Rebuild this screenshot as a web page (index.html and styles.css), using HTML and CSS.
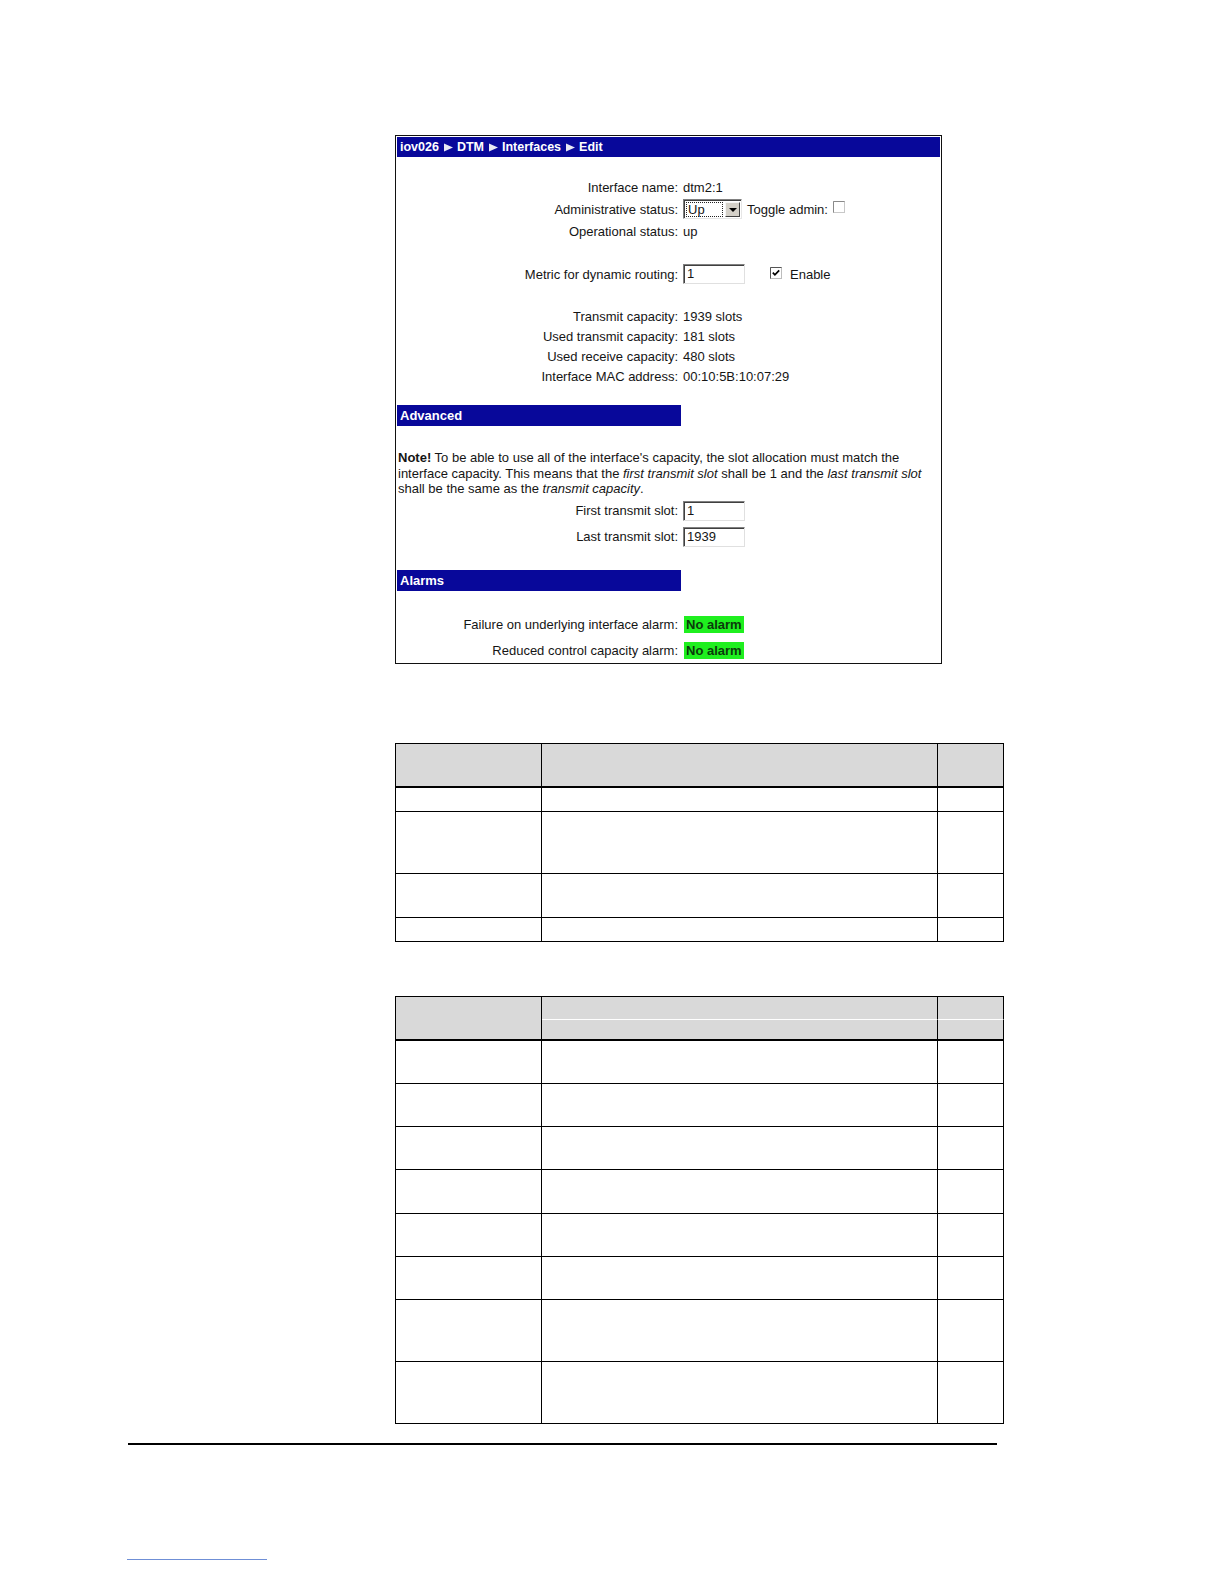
FILE: index.html
```html
<!DOCTYPE html>
<html lang="en">
<head>
<meta charset="utf-8">
<title>iov026 - DTM - Interfaces - Edit</title>
<link rel="stylesheet" href="styles.css">
</head>
<body>
<div class="page">
  <div class="shot">
    <div class="crumb">
      <span>iov026</span>
      <svg class="tri" width="9" height="9" viewBox="0 0 9 9"><polygon points="0,0.5 9,4.5 0,8.5" fill="#e8e8f4"/></svg>
      <span>DTM</span>
      <svg class="tri" width="9" height="9" viewBox="0 0 9 9"><polygon points="0,0.5 9,4.5 0,8.5" fill="#e8e8f4"/></svg>
      <span>Interfaces</span>
      <svg class="tri" width="9" height="9" viewBox="0 0 9 9"><polygon points="0,0.5 9,4.5 0,8.5" fill="#e8e8f4"/></svg>
      <span>Edit</span>
    </div>

    <div class="group g-top">
      <div class="frow h22"><span class="lbl">Interface name:</span><span class="val">dtm2:1</span></div>
      <div class="frow h22"><span class="lbl">Administrative status:</span>
        <span class="val">
          <span class="sel"><span class="sel-val"><span class="sel-focus">Up</span></span><span class="sel-btn"><span class="caret"></span></span></span>
          <span class="toggle">Toggle admin:</span>
          <svg class="cb cb-toggle" width="12" height="12" viewBox="0 0 12 12"><rect x="0.5" y="0.5" width="11" height="11" fill="#fff" stroke="#c8c8c8"/><path d="M0.5 11.5V0.5H11.5" stroke="#8a8a8a" fill="none"/></svg>
        </span>
      </div>
      <div class="frow h22"><span class="lbl">Operational status:</span><span class="val">up</span></div>
    </div>

    <div class="group g-metric">
      <div class="frow h22"><span class="lbl">Metric for dynamic routing:</span>
        <span class="val">
          <span class="inp">1</span>
          <svg class="cb cb-enable" width="12" height="12" viewBox="0 0 12 12"><rect x="0.5" y="0.5" width="11" height="11" fill="#fff" stroke="#bdbdbd"/><path d="M0.5 11.5V0.5H11.5" stroke="#555" fill="none"/><path d="M2.8 5.6L4.9 7.8L9.2 3.3" stroke="#000" stroke-width="1.7" fill="none"/></svg>
          <span class="enable">Enable</span>
        </span>
      </div>
    </div>

    <div class="group g-cap">
      <div class="frow h20"><span class="lbl">Transmit capacity:</span><span class="val">1939 slots</span></div>
      <div class="frow h20"><span class="lbl">Used transmit capacity:</span><span class="val">181 slots</span></div>
      <div class="frow h20"><span class="lbl">Used receive capacity:</span><span class="val">480 slots</span></div>
      <div class="frow h20"><span class="lbl">Interface MAC address:</span><span class="val">00:10:5B:10:07:29</span></div>
    </div>

    <div class="sect s-adv">Advanced</div>

    <p class="note"><b>Note!</b> To be able to use all of the interface's capacity, the slot allocation must match the<br>interface capacity. This means that the <i>first transmit slot</i> shall be 1 and the <i>last transmit slot</i><br>shall be the same as the <i>transmit capacity</i>.</p>

    <div class="group g-slot">
      <div class="frow h26"><span class="lbl">First transmit slot:</span><span class="val"><span class="inp">1</span></span></div>
      <div class="frow h26"><span class="lbl">Last transmit slot:</span><span class="val"><span class="inp">1939</span></span></div>
    </div>

    <div class="sect s-alarm">Alarms</div>

    <div class="group g-alarm">
      <div class="frow h26"><span class="lbl">Failure on underlying interface alarm:</span><span class="val"><span class="ok">No alarm</span></span></div>
      <div class="frow h25"><span class="lbl">Reduced control capacity alarm:</span><span class="val"><span class="ok">No alarm</span></span></div>
    </div>
  </div>

  <div class="grid t1">
    <div class="c hd"></div><div class="c hd"></div><div class="c hd"></div>
    <div class="c"></div><div class="c"></div><div class="c"></div>
    <div class="c"></div><div class="c"></div><div class="c"></div>
    <div class="c"></div><div class="c"></div><div class="c"></div>
    <div class="c"></div><div class="c"></div><div class="c"></div>
  </div>

  <div class="grid t2">
    <div class="c hd span2"></div><div class="c hd sub1"></div><div class="c hd sub1"></div>
    <div class="c hd"></div><div class="c hd"></div>
    <div class="c"></div><div class="c"></div><div class="c"></div>
    <div class="c"></div><div class="c"></div><div class="c"></div>
    <div class="c"></div><div class="c"></div><div class="c"></div>
    <div class="c"></div><div class="c"></div><div class="c"></div>
    <div class="c"></div><div class="c"></div><div class="c"></div>
    <div class="c"></div><div class="c"></div><div class="c"></div>
    <div class="c"></div><div class="c"></div><div class="c"></div>
    <div class="c"></div><div class="c"></div><div class="c"></div>
  </div>

  <div class="rule"></div>
  <div class="link-line"></div>
</div>
</body>
</html>
```

FILE: styles.css
```css
html, body {
  margin: 0;
  padding: 0;
  background: #fff;
}

.page {
  font-family: "Liberation Sans", Arial, sans-serif;
  font-size: 13px;
  color: #151515;
  padding-top: 135px;
}

/* ---- screenshot box ---- */
.shot {
  margin-left: 395px;
  width: 545px;
  border: 1px solid #111;
}

.crumb {
  margin: 1px 1px 0;
  height: 20px;
  background: #08089a;
  color: #fff;
  font-size: 12.5px;
  font-weight: bold;
  display: flex;
  align-items: center;
  padding-left: 3px;
}

.tri {
  display: block;
  margin: 1px 4px 0 5px;
}

.group {
  display: flex;
  flex-direction: column;
}

.g-top { margin-top: 19px; }
.g-metric { margin-top: 21px; }
.g-cap { margin-top: 21px; }
.g-slot { margin-top: 1px; }
.g-alarm { margin-top: 21px; }

.frow {
  display: grid;
  grid-template-columns: 282px 1fr;
  column-gap: 5px;
  align-items: center;
}

.h20 { height: 20px; }
.h22 { height: 22px; }
.h25 { height: 25px; }
.h26 { height: 26px; }

.lbl {
  text-align: right;
  white-space: nowrap;
}

.val {
  display: flex;
  align-items: center;
  white-space: nowrap;
}

/* fake select */
.sel {
  display: flex;
  box-sizing: border-box;
  width: 59px;
  height: 20px;
  border: 1px solid;
  border-color: #808080 #e6e6e6 #e6e6e6 #808080;
  box-shadow: inset 1px 1px 0 #404040;
  background: #fff;
  padding: 2px 1px 1px 2px;
}

.sel-val {
  flex: 1;
  display: flex;
}

.sel-focus {
  flex: 1;
  outline: 1px dotted #222;
  outline-offset: -1px;
  padding-left: 2px;
  line-height: 15px;
  margin-right: 2px;
}

.sel-btn {
  width: 15px;
  box-sizing: border-box;
  background: #d4d0c8;
  border: 1px solid;
  border-color: #f4f4f4 #404040 #404040 #f4f4f4;
  display: flex;
  align-items: center;
  justify-content: center;
}

.caret {
  width: 0;
  height: 0;
  border-left: 4px solid transparent;
  border-right: 4px solid transparent;
  border-top: 4px solid #000;
}

.toggle {
  margin-left: 5px;
}

.cb {
  display: block;
}

.cb-toggle {
  margin-left: 5px;
  margin-top: -4px;
}

.cb-enable {
  margin-left: 25px;
  margin-top: -2px;
}

.enable {
  margin-left: 8px;
}

/* fake text input */
.inp {
  display: block;
  box-sizing: border-box;
  width: 62px;
  height: 20px;
  border: 1px solid;
  border-color: #808080 #e0e0e0 #e0e0e0 #808080;
  box-shadow: inset 1px 1px 0 #404040;
  background: #fff;
  padding-left: 3px;
  line-height: 18px;
}

/* section bars */
.sect {
  margin-left: 1px;
  width: 284px;
  height: 21px;
  line-height: 21px;
  background: #08089a;
  color: #fff;
  font-weight: bold;
  padding-left: 3px;
  box-sizing: border-box;
}

.s-adv { margin-top: 19px; }
.s-alarm { margin-top: 20px; }

.note {
  margin: 24px 0 0;
  padding-left: 2px;
  line-height: 15.5px;
  white-space: nowrap;
}

.ok {
  margin-left: 1px;
  height: 17px;
  line-height: 17px;
  padding: 0 2px;
  background: #1fef1f;
  color: #0b3a0b;
  font-weight: bold;
}

/* ---- empty tables ---- */
.grid {
  display: grid;
  margin-left: 395px;
  width: 609px;
  box-sizing: border-box;
  grid-template-columns: 146px 396px 66px;
  border-top: 1px solid #000;
  border-left: 1px solid #000;
}

.c {
  box-sizing: border-box;
  border-right: 1px solid #000;
  border-bottom: 1px solid #000;
}

.hd {
  background: #d9d9d9;
  border-bottom: 2px solid #000;
}

.t1 {
  margin-top: 79px;
  grid-template-rows: 44px 24px 62px 44px 24px;
}

.t2 {
  margin-top: 54px;
  grid-template-rows: 23px 21px 43px 43px 43px 44px 43px 43px 62px 62px;
}

.t2 .span2 {
  grid-row: span 2;
}

.t2 .sub1 {
  border-bottom: 1px solid #fff;
}

.rule {
  margin: 19px 0 0 128px;
  width: 869px;
  height: 2px;
  background: #000;
}

.link-line {
  margin: 114px 0 0 127px;
  width: 140px;
  height: 1px;
  background: #6f8fd6;
}
```
